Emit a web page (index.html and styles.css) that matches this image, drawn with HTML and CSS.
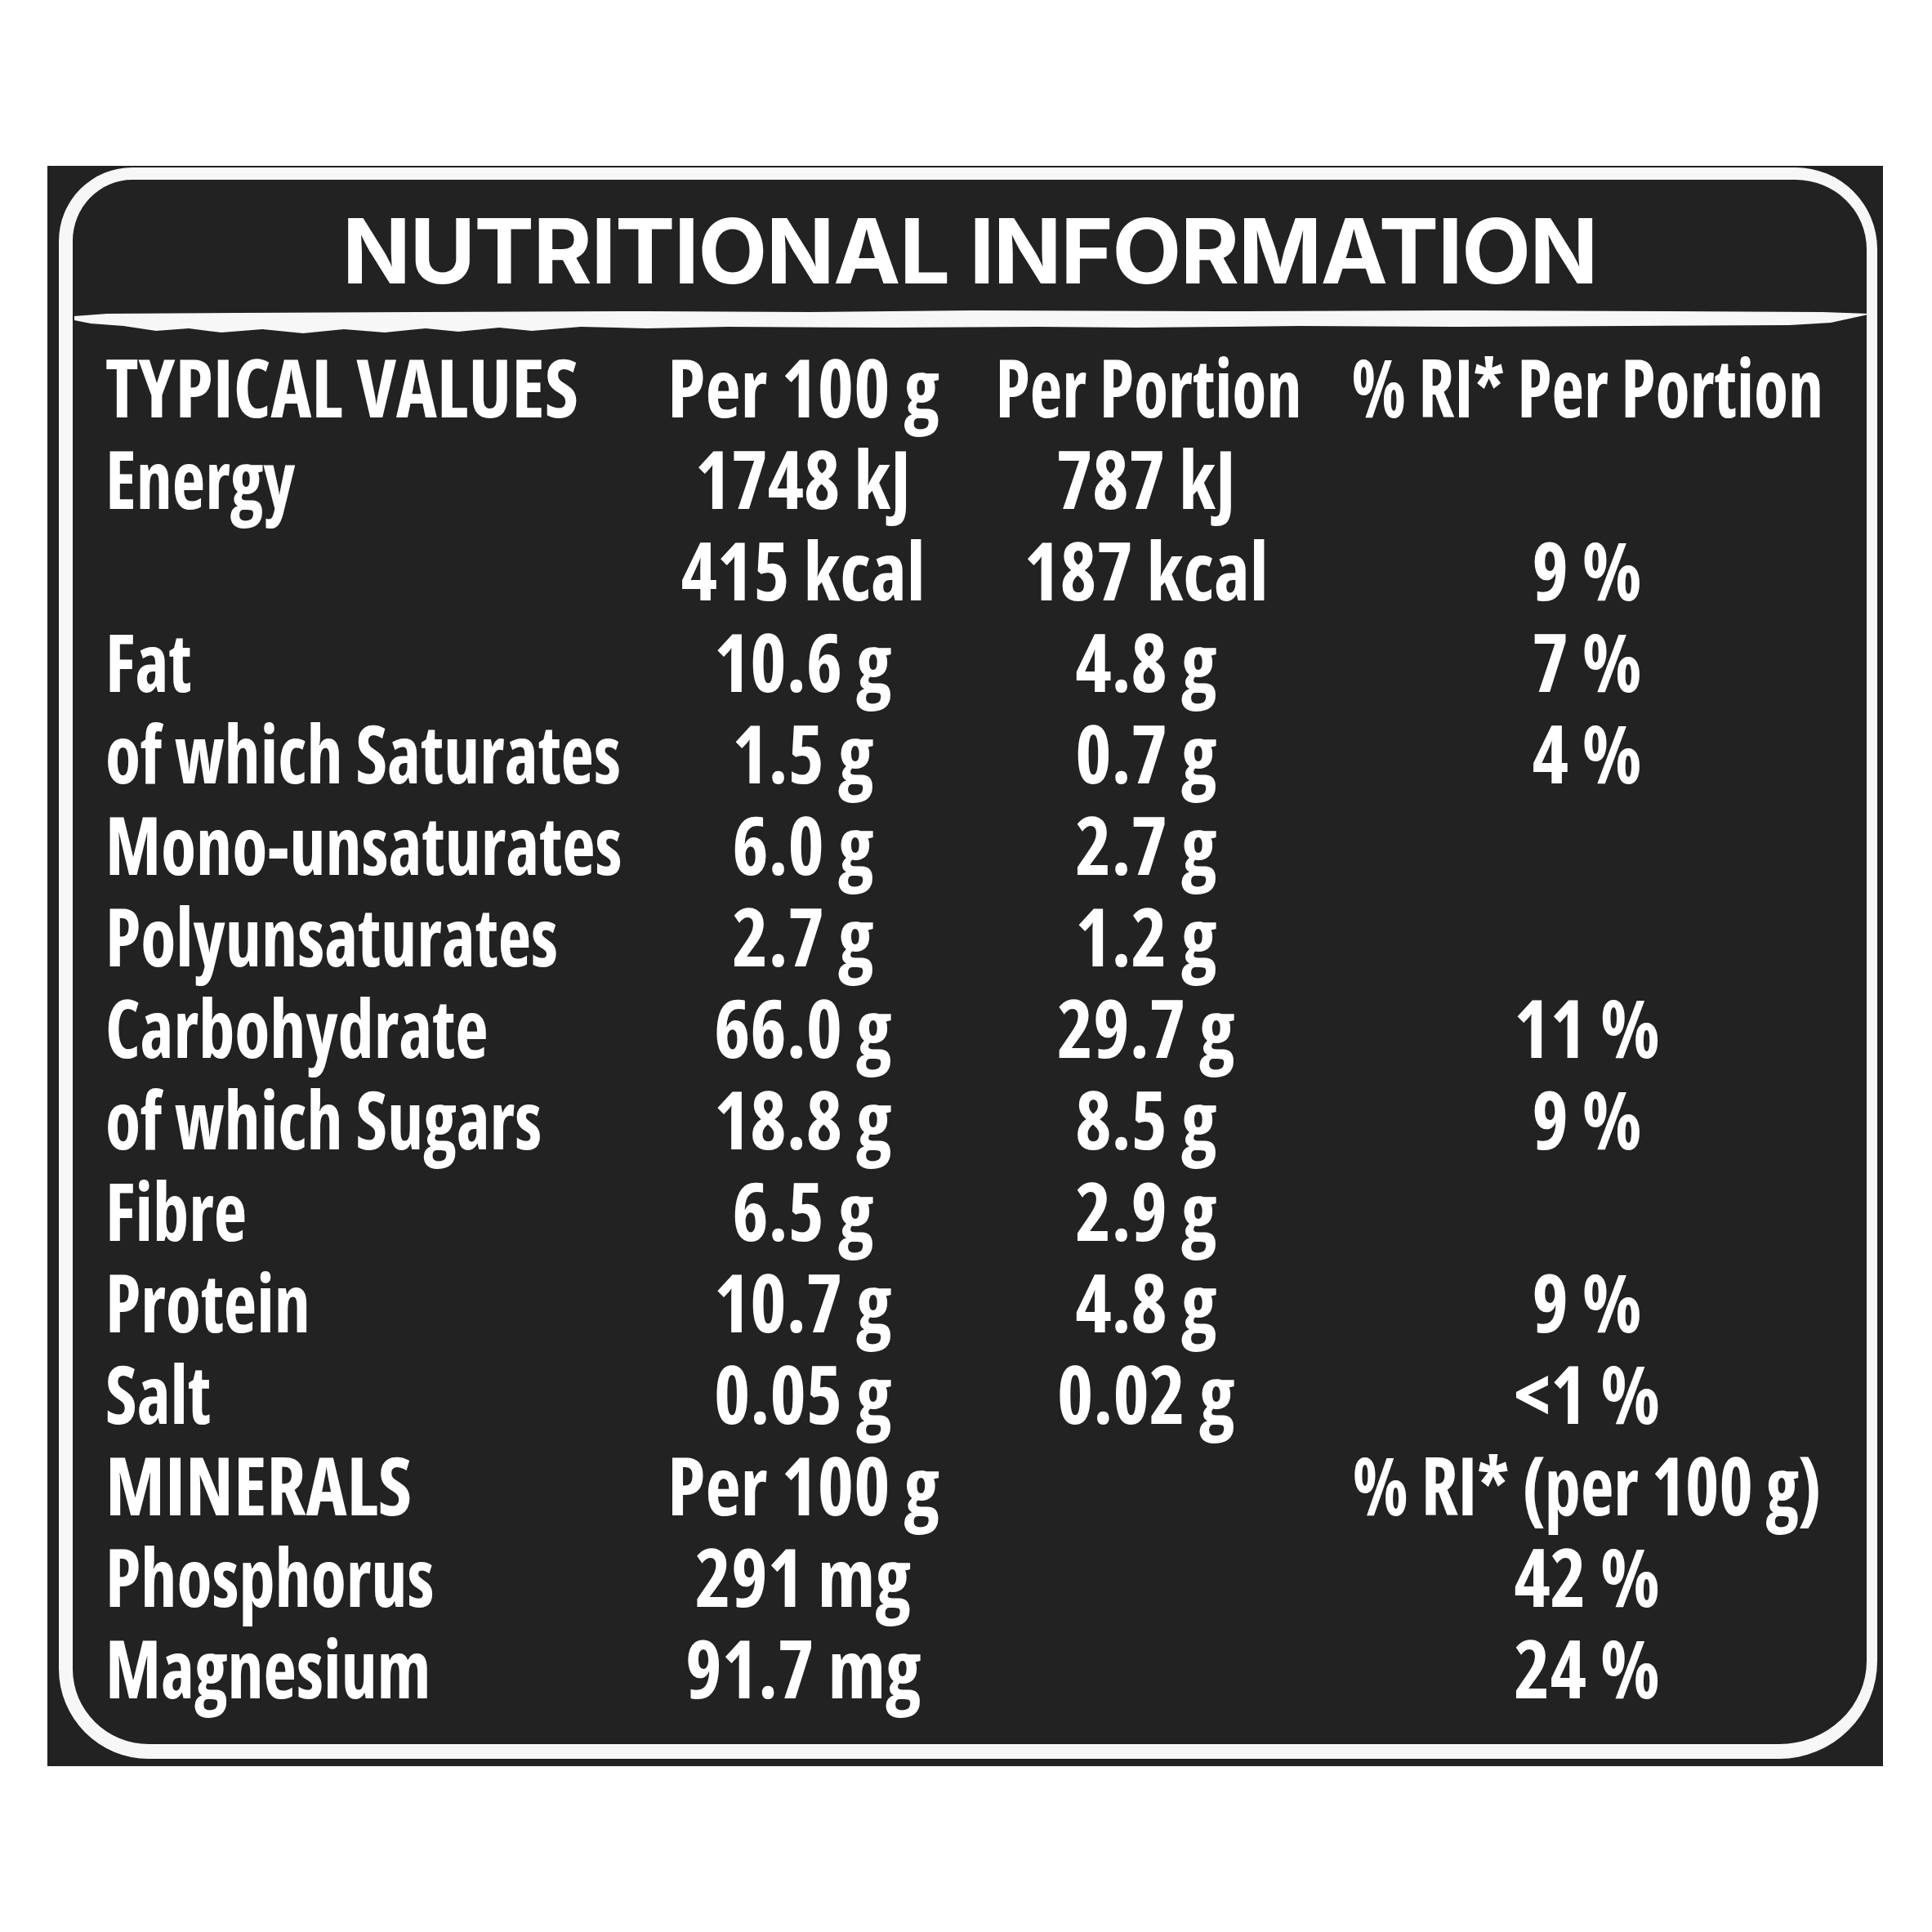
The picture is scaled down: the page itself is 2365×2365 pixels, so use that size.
FILE: index.html
```html
<!DOCTYPE html>
<html lang="en">
<head>
<meta charset="utf-8">
<title>Nutritional Information</title>
<link rel="stylesheet" href="styles.css">
</head>
<body>
<div class="panel">
  <div class="frame">
    <h1 class="title">NUTRITIONAL INFORMATION</h1>
    <svg class="rule" viewBox="0 0 2200 28" preserveAspectRatio="none" aria-hidden="true">
      <path fill="#f7f7f7" d="M0 7 L40 4 L200 3 L420 2 L700 1 L900 2 L1100 0 L1400 1 L1700 0 L1950 1 L2140 2 L2200 4 L2150 15 L2100 18 L1900 19 L1700 20 L1500 19 L1300 21 L1180 20 L1000 21 L800 20 L700 22 L620 20 L560 25 L520 21 L470 26 L430 22 L380 27 L330 23 L280 28 L230 23 L180 27 L140 22 L100 25 L60 19 L20 16 L0 12 Z"/>
    </svg>
    <div class="table">
      <div class="c1 cap"><span class="t">TYPICAL VALUES</span></div><div class="cv num"><span class="t">Per 100 g</span></div><div class="cv hd"><span class="t">Per Portion</span></div><div class="cv hd"><span class="t">% RI* Per Portion</span></div>
      <div class="c1 lbl"><span class="t">Energy</span></div><div class="cv num"><span class="t">1748 kJ</span></div><div class="cv num"><span class="t">787 kJ</span></div><div class="cv"></div>
      <div class="c1"></div><div class="cv num"><span class="t">415 kcal</span></div><div class="cv num"><span class="t">187 kcal</span></div><div class="cv num"><span class="t">9 %</span></div>
      <div class="c1 lbl"><span class="t">Fat</span></div><div class="cv num"><span class="t">10.6 g</span></div><div class="cv num"><span class="t">4.8 g</span></div><div class="cv num"><span class="t">7 %</span></div>
      <div class="c1 lbl"><span class="t">of which Saturates</span></div><div class="cv num"><span class="t">1.5 g</span></div><div class="cv num"><span class="t">0.7 g</span></div><div class="cv num"><span class="t">4 %</span></div>
      <div class="c1 lbl"><span class="t">Mono-unsaturates</span></div><div class="cv num"><span class="t">6.0 g</span></div><div class="cv num"><span class="t">2.7 g</span></div><div class="cv"></div>
      <div class="c1 lbl"><span class="t">Polyunsaturates</span></div><div class="cv num"><span class="t">2.7 g</span></div><div class="cv num"><span class="t">1.2 g</span></div><div class="cv"></div>
      <div class="c1 lbl"><span class="t">Carbohydrate</span></div><div class="cv num"><span class="t">66.0 g</span></div><div class="cv num"><span class="t">29.7 g</span></div><div class="cv num"><span class="t">11 %</span></div>
      <div class="c1 lbl"><span class="t">of which Sugars</span></div><div class="cv num"><span class="t">18.8 g</span></div><div class="cv num"><span class="t">8.5 g</span></div><div class="cv num"><span class="t">9 %</span></div>
      <div class="c1 lbl"><span class="t">Fibre</span></div><div class="cv num"><span class="t">6.5 g</span></div><div class="cv num"><span class="t">2.9 g</span></div><div class="cv"></div>
      <div class="c1 lbl"><span class="t">Protein</span></div><div class="cv num"><span class="t">10.7 g</span></div><div class="cv num"><span class="t">4.8 g</span></div><div class="cv num"><span class="t">9 %</span></div>
      <div class="c1 lbl"><span class="t">Salt</span></div><div class="cv num"><span class="t">0.05 g</span></div><div class="cv num"><span class="t">0.02 g</span></div><div class="cv num"><span class="t">&lt;1 %</span></div>
      <div class="c1 cap"><span class="t">MINERALS</span></div><div class="cv num"><span class="t">Per 100 g</span></div><div class="cv"></div><div class="cv hdw"><span class="t">% RI* (per 100 g)</span></div>
      <div class="c1 lbl"><span class="t">Phosphorus</span></div><div class="cv num"><span class="t">291 mg</span></div><div class="cv"></div><div class="cv num"><span class="t">42 %</span></div>
      <div class="c1 lbl"><span class="t">Magnesium</span></div><div class="cv num"><span class="t">91.7 mg</span></div><div class="cv"></div><div class="cv num"><span class="t">24 %</span></div>
    </div>
  </div>
</div>
</body>
</html>
```

FILE: styles.css
```css
html, body {
  margin: 0;
  padding: 0;
  background: #ffffff;
}

.panel {
  box-sizing: border-box;
  width: 2247px;
  height: 1959px;
  margin: 203px 0 0 58px;
  background: #222222;
  padding: 2px 7px 9px 14px;
}

.frame {
  box-sizing: border-box;
  height: 100%;
  border-style: solid;
  border-color: #f7f7f7;
  border-width: 15px 13px 18px 17px;
  border-radius: 90px 100px 120px 110px;
  display: flex;
  flex-direction: column;
}

.title {
  margin: 32px 0 0 0;
  font-family: "Inter", "Noto Sans", sans-serif;
  font-weight: 700;
  font-size: 110px;
  line-height: 110px;
  color: #ffffff;
  text-align: center;
  letter-spacing: -1.4px;
}

.rule {
  display: block;
  width: 2200px;
  height: 28px;
  margin: 18px 0 0 2px;
}

.table {
  display: grid;
  grid-template-columns: 644px 420px 420px 660px;
  grid-auto-rows: 112px;
  margin: 9px 0 0 40px;
  font-family: "Open Sans", "Liberation Sans", sans-serif;
  font-weight: 700;
  font-stretch: 75%;
  font-size: 98px;
  line-height: 112px;
  color: #ffffff;
  white-space: nowrap;
}

.t {
  display: inline-block;
}

.c1 {
  text-align: left;
}

.c1 .t {
  transform-origin: left center;
}

.cv {
  text-align: center;
}

.cv .t {
  transform-origin: center center;
}

.lbl .t {
  transform: scaleX(0.9);
}

.cap .t {
  transform: scaleX(0.965);
}

.hd .t {
  transform: scaleX(0.88);
}

.hdw .t {
  transform: scaleX(0.9);
}

.num .t {
  transform: scaleX(0.965);
}
```
